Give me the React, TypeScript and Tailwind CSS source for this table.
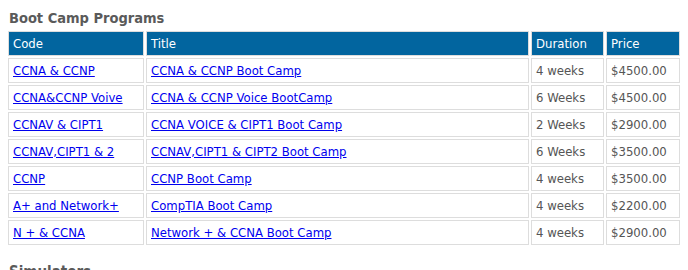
import React from "react";

const rows = [
  ["CCNA & CCNP", "CCNA & CCNP Boot Camp", "4 weeks", "$4500.00"],
  ["CCNA&CCNP Voive", "CCNA & CCNP Voice BootCamp", "6 Weeks", "$4500.00"],
  ["CCNAV & CIPT1", "CCNA VOICE & CIPT1 Boot Camp", "2 Weeks", "$2900.00"],
  ["CCNAV,CIPT1 & 2", "CCNAV,CIPT1 & CIPT2 Boot Camp", "6 Weeks", "$3500.00"],
  ["CCNP", "CCNP Boot Camp", "4 weeks", "$3500.00"],
  ["A+ and Network+", "CompTIA Boot Camp", "4 weeks", "$2200.00"],
  ["N + & CCNA", "Network + & CCNA Boot Camp", "4 weeks", "$2900.00"],
];

export default function App() {
  return (
    <div
      className="w-[688px] h-[270px] overflow-hidden bg-white text-[#555] px-[6px]"
      style={{ fontFamily: '"DejaVu Sans Condensed", "DejaVu Sans", sans-serif' }}
    >
      <h2 className="pl-[3px] pt-[9px] h-[29px] text-[14.5px] leading-[18px] font-bold text-[#5a5a5a]">
        Boot Camp Programs
      </h2>
      <table className="w-[676px] table-fixed border-separate border-spacing-[2px] text-[13px] leading-[15px]">
        <colgroup>
          <col className="w-[136px]" />
          <col className="w-[383px]" />
          <col className="w-[73px]" />
          <col className="w-[74px]" />
        </colgroup>
        <thead>
          <tr>
            {["Code", "Title", "Duration", "Price"].map((h) => (
              <th
                key={h}
                className="h-[25px] border border-[#ddd] bg-[#02659f] text-white font-normal text-left px-[4px] py-0"
              >
                {h}
              </th>
            ))}
          </tr>
        </thead>
        <tbody>
          {rows.map((r) => (
            <tr key={r[0]}>
              <td className="h-[25px] border border-[#ddd] px-[4px] py-0">
                <a href="#" className="text-[#0000ee] underline">{r[0]}</a>
              </td>
              <td className="h-[25px] border border-[#ddd] px-[4px] py-0">
                <a href="#" className="text-[#0000ee] underline">{r[1]}</a>
              </td>
              <td className="h-[25px] border border-[#ddd] px-[4px] py-0">{r[2]}</td>
              <td className="h-[25px] border border-[#ddd] px-[4px] py-0">{r[3]}</td>
            </tr>
          ))}
        </tbody>
      </table>
      <h2 className="pl-[3px] pt-[16px] text-[15px] leading-[18px] font-bold text-[#5a5a5a]">
        Simulators
      </h2>
    </div>
  );
}
